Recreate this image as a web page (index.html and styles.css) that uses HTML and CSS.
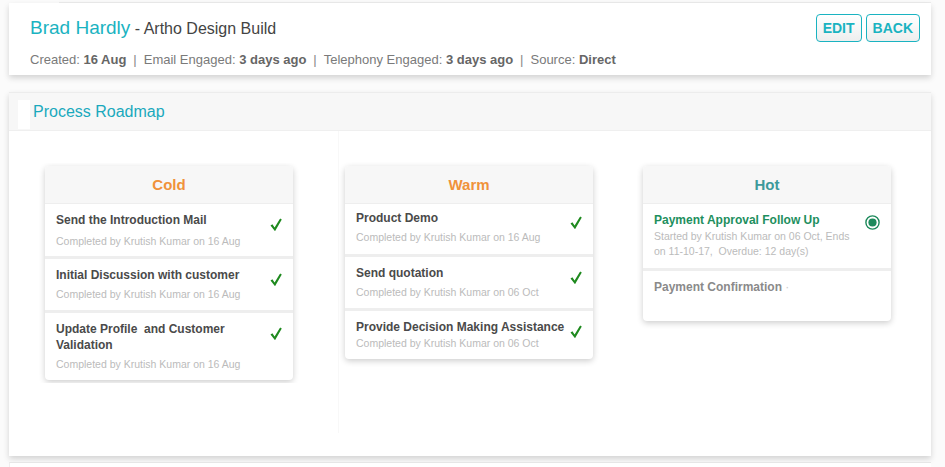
FILE: index.html
```html
<!DOCTYPE html>
<html>
<head>
  <title>Brad Hardly - Lead</title>
  <link rel="stylesheet" href="styles.css">
</head>
<body>
  <div class="page">
    <div class="top-strip"></div>

    <div class="lead-card">
      <div class="lead-info">
        <h1 class="lead-title"><span class="lead-name">Brad Hardly</span> - Artho Design Build</h1>
        <div class="lead-meta">
          Created: <b>16 Aug</b><span class="sep">|</span>Email Engaged: <b>3 days ago</b><span class="sep">|</span>Telephony Engaged: <b>3 days ago</b><span class="sep">|</span>Source: <b>Direct</b>
        </div>
      </div>
      <div class="lead-actions">
        <button class="btn-outline">EDIT</button>
        <button class="btn-outline">BACK</button>
      </div>
    </div>

    <div class="panel">
      <div class="panel-head">
        <span class="panel-tab"></span>
        <span class="panel-title">Process Roadmap</span>
      </div>

      <div class="roadmap">
        <div class="stage-col stage-col-first">
          <div class="stage-clip">
            <div class="stage-card">
              <div class="stage-head cold">Cold</div>
              <div class="step step-roomy">
                <div class="step-body">
                  <div class="step-title">Send the Introduction Mail</div>
                  <div class="step-sub">Completed by Krutish Kumar on 16 Aug</div>
                </div>
                <svg class="step-check" width="12" height="14" viewBox="0 0 12 14"><path d="M0.5 7.6 L2.4 6.3 L4.6 9.6 L10.1 0.6 L11.8 1.6 L5 13.2 Z" fill="#1f8a1f"/></svg>
              </div>
              <div class="step">
                <div class="step-body">
                  <div class="step-title">Initial Discussion with customer</div>
                  <div class="step-sub">Completed by Krutish Kumar on 16 Aug</div>
                </div>
                <svg class="step-check" width="12" height="14" viewBox="0 0 12 14"><path d="M0.5 7.6 L2.4 6.3 L4.6 9.6 L10.1 0.6 L11.8 1.6 L5 13.2 Z" fill="#1f8a1f"/></svg>
              </div>
              <div class="step">
                <div class="step-body">
                  <div class="step-title">Update Profile&nbsp; and Customer Validation</div>
                  <div class="step-sub">Completed by Krutish Kumar on 16 Aug</div>
                </div>
                <svg class="step-check" width="12" height="14" viewBox="0 0 12 14"><path d="M0.5 7.6 L2.4 6.3 L4.6 9.6 L10.1 0.6 L11.8 1.6 L5 13.2 Z" fill="#1f8a1f"/></svg>
              </div>
            </div>
          </div>
        </div>

        <div class="stage-col">
          <div class="stage-card">
            <div class="stage-head warm">Warm</div>
            <div class="step step-tight">
              <div class="step-body">
                <div class="step-title">Product Demo</div>
                <div class="step-sub">Completed by Krutish Kumar on 16 Aug</div>
              </div>
              <svg class="step-check" width="12" height="14" viewBox="0 0 12 14"><path d="M0.5 7.6 L2.4 6.3 L4.6 9.6 L10.1 0.6 L11.8 1.6 L5 13.2 Z" fill="#1f8a1f"/></svg>
            </div>
            <div class="step">
              <div class="step-body">
                <div class="step-title">Send quotation</div>
                <div class="step-sub">Completed by Krutish Kumar on 06 Oct</div>
              </div>
              <svg class="step-check" width="12" height="14" viewBox="0 0 12 14"><path d="M0.5 7.6 L2.4 6.3 L4.6 9.6 L10.1 0.6 L11.8 1.6 L5 13.2 Z" fill="#1f8a1f"/></svg>
            </div>
            <div class="step">
              <div class="step-body">
                <div class="step-title">Provide Decision Making Assistance</div>
                <div class="step-sub step-sub-close">Completed by Krutish Kumar on 06 Oct</div>
              </div>
              <svg class="step-check" width="12" height="14" viewBox="0 0 12 14"><path d="M0.5 7.6 L2.4 6.3 L4.6 9.6 L10.1 0.6 L11.8 1.6 L5 13.2 Z" fill="#1f8a1f"/></svg>
            </div>
          </div>
        </div>

        <div class="stage-col">
          <div class="stage-card">
            <div class="stage-head hot">Hot</div>
            <div class="step">
              <div class="step-body">
                <div class="step-title step-title-active">Payment Approval Follow Up</div>
                <div class="step-sub step-sub-multi">Started by Krutish Kumar on 06 Oct, Ends on 11-10-17,&nbsp; Overdue: 12 day(s)</div>
              </div>
              <svg class="step-radio" width="15" height="15" viewBox="0 0 15 15"><circle cx="7.5" cy="7.5" r="6.6" fill="#fff" stroke="#1e8a5c" stroke-width="1.4"/><circle cx="7.5" cy="7.5" r="4.1" fill="#1e8a5c"/></svg>
            </div>
            <div class="step step-pending">
              <div class="step-body">
                <div class="step-title step-title-muted">Payment Confirmation <span class="dot">&middot;</span></div>
              </div>
            </div>
          </div>
        </div>
      </div>
    </div>

    <div class="next-card"></div>
  </div>
</body>
</html>
```

FILE: styles.css
```css
body {
  margin: 0;
  background: #fbfbfb;
  font-family: "Liberation Sans", Arial, sans-serif;
  color: #444;
  overflow: hidden;
}

.page {
  padding: 0 14px 0 9px;
}

.top-strip {
  height: 2px;
  margin-left: 50px;
  border-bottom: 1px solid #ececec;
  background: #fafafa;
}

/* lead header */
.lead-card {
  display: flex;
  justify-content: space-between;
  align-items: flex-start;
  height: 72px;
  box-sizing: border-box;
  padding: 11px 11px 0 21px;
  background: #fff;
  box-shadow: 0 3px 6px rgba(0, 0, 0, 0.16);
}

.lead-title {
  margin: 2px 0 0;
  font-size: 16px;
  font-weight: normal;
  line-height: 24px;
  color: #444;
}

.lead-name {
  font-size: 19px;
  color: #1ab3c1;
}

.lead-meta {
  margin-top: 10px;
  font-size: 13px;
  line-height: 18px;
  color: #7a7a7a;
}

.lead-meta b {
  color: #666;
}

.sep {
  margin: 0 7px;
  color: #888;
}

.lead-actions {
  display: flex;
  gap: 4px;
}

.btn-outline {
  height: 28px;
  padding: 0 6px;
  font-family: "Liberation Sans", Arial, sans-serif;
  font-size: 14px;
  font-weight: bold;
  color: #1ab3c1;
  background: linear-gradient(#ffffff, #eeeeee);
  border: 1px solid #1ab3c1;
  border-radius: 4px;
  cursor: pointer;
}

/* roadmap panel */
.panel {
  margin-top: 17px;
  height: 363px;
  background: #fff;
  border-top: 1px solid #ececec;
  box-shadow: 0 3px 6px rgba(0, 0, 0, 0.16);
}

.panel-head {
  display: flex;
  align-items: center;
  height: 37px;
  padding-left: 9px;
  background: #f7f7f7;
  border-bottom: 1px solid #efefef;
}

.panel-tab {
  width: 12px;
  height: 29px;
  margin-top: 5px;
  background: #fff;
}

.panel-title {
  margin-left: 3px;
  font-size: 16px;
  color: #1aa9bd;
}

.roadmap {
  display: flex;
  align-items: flex-start;
}

.stage-col {
  padding-top: 35px;
  margin-left: 6px;
}

.stage-col + .stage-col + .stage-col {
  margin-left: 50px;
}

.stage-col-first {
  box-sizing: border-box;
  width: 330px;
  height: 302px;
  margin-left: 0;
  padding: 32px 0 0 29px;
  border-right: 1px solid #f8f8f8;
}

.stage-clip {
  width: 262px;
  box-sizing: border-box;
  padding: 3px 7px;
  overflow: hidden;
}

.stage-card {
  width: 248px;
  background: #fff;
  border-radius: 4px;
  box-shadow: 0 2px 6px rgba(0, 0, 0, 0.2);
  overflow: hidden;
}

.stage-head {
  height: 37px;
  line-height: 37px;
  text-align: center;
  font-size: 15px;
  font-weight: bold;
  background: #f7f7f7;
  border-bottom: 1px solid #eee;
}

.cold,
.warm {
  color: #f0923a;
}

.hot {
  color: #3d9a9b;
}

.step {
  display: flex;
  align-items: flex-start;
  gap: 4px;
  padding: 8px 11px 9px 11px;
}

.step + .step {
  border-top: 3px solid #eeeeee;
}

.step-roomy {
  padding-bottom: 8px;
}

.step-roomy .step-sub {
  margin-top: 6px;
}

.step-tight {
  padding-top: 6px;
  padding-bottom: 10px;
}

.step-pending {
  min-height: 33px;
}

.step-body {
  flex: 1;
}

.step-title {
  font-size: 12px;
  font-weight: bold;
  line-height: 16px;
  color: #4a4a4a;
}

.step-title-active {
  color: #1e8f5e;
}

.step-title-muted {
  color: #8a8a8a;
}

.dot {
  font-weight: normal;
  color: #ccc;
}

.step-sub {
  margin-top: 4px;
  font-size: 10.5px;
  line-height: 14px;
  color: #bbb;
}

.step-sub-close {
  margin-top: 1px;
}

.step-sub-multi {
  margin-top: 1px;
  line-height: 15px;
}

.step-check {
  flex: none;
  margin-top: 6px;
}

.step-radio {
  flex: none;
  margin: 3px 0 0 4px;
}

.next-card {
  margin-top: 6px;
  height: 20px;
  background: #fff;
  border-top: 1px solid #e6e6e6;
  border-left: 1px solid #eee;
}
```
